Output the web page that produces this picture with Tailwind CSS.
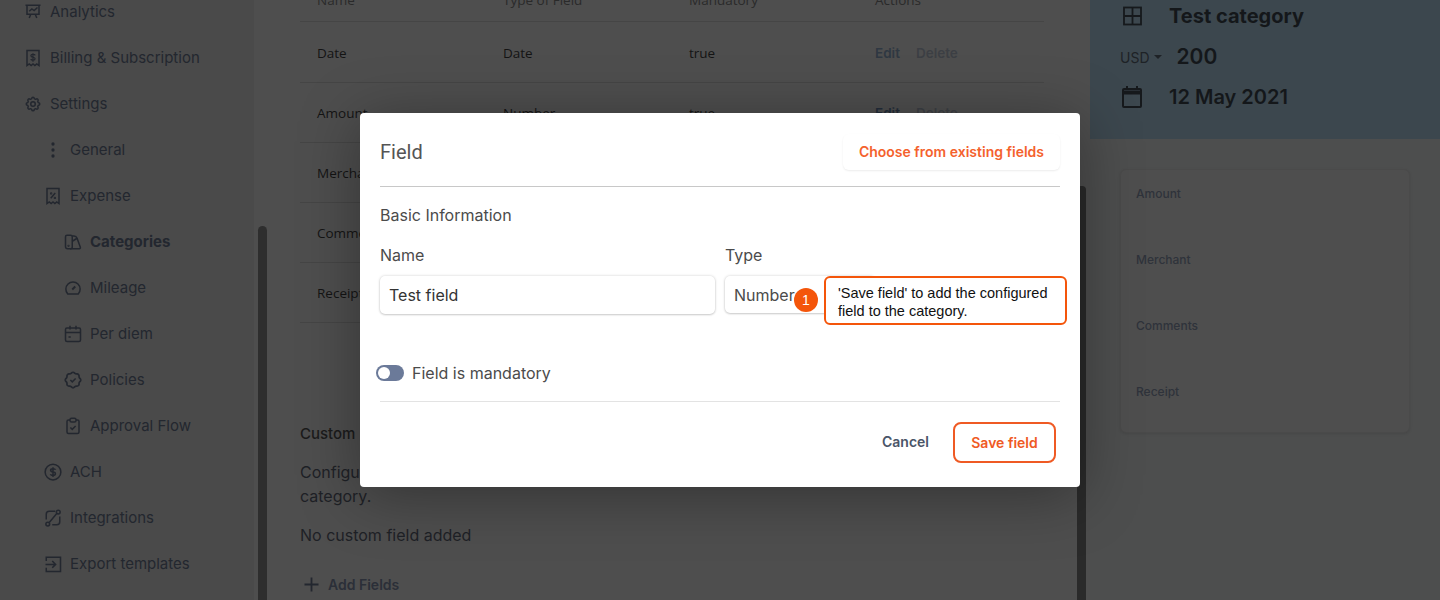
<!DOCTYPE html>
<html lang="en">
<head>
    <meta charset="UTF-8">
    <meta name="viewport" content="width=device-width, initial-scale=1.0">
    <title>Category field</title>
    <script src="https://cdn.jsdelivr.net/npm/@tailwindcss/browser@4"></script>
</head>
<body class="h-[600px] overflow-hidden bg-[#4d4d4d] font-['Inter',sans-serif]">
    <div class="relative flex h-[600px] w-[1440px] overflow-hidden">

        <!-- sidebar -->
        <aside class="relative h-full w-[254px] shrink-0 bg-[#4a4a4a] text-[15px] text-[#23272f]">
            <div class="-mt-[11px] flex flex-col">
                <a class="flex h-[46px] items-center gap-2 pl-6">
                    <svg class="h-[18px] w-[18px]" viewBox="0 0 24 24" fill="none" stroke="#23272f" stroke-width="2"><path d="M2 3h20M4 3v12h16V3M7 11l3.500-3 3 2L18 6M9 15l-2 5M15 15l2 5"/></svg>
                    <span>Analytics</span>
                </a>
                <a class="flex h-[46px] items-center gap-2 pl-6">
                    <svg class="h-[18px] w-[18px]" viewBox="0 0 24 24" fill="none" stroke="#23272f" stroke-width="2"><path d="M4 2h16v20l-3-2-2.500 2-2.500-2-2.500 2L7 20l-3 2z"/><path d="M15 8.500c-.5-1-1.500-1.500-3-1.500-1.700 0-2.800.8-2.800 2s1 1.800 2.800 2 2.800.9 2.800 2.100-1.100 1.900-2.800 1.900c-1.500 0-2.500-.5-3-1.500M12 5.500v11.500" stroke-width="1.600"/></svg>
                    <span>Billing &amp; Subscription</span>
                </a>
                <a class="flex h-[46px] items-center gap-2 pl-6">
                    <svg class="h-[18px] w-[18px]" viewBox="0 0 24 24" fill="none" stroke="#23272f" stroke-width="2"><path d="M10.325 4.317c.426 -1.756 2.924 -1.756 3.35 0a1.724 1.724 0 0 0 2.573 1.066c1.543 -.94 3.31 .826 2.37 2.37a1.724 1.724 0 0 0 1.065 2.572c1.756 .426 1.756 2.924 0 3.35a1.724 1.724 0 0 0 -1.066 2.573c.94 1.543 -.826 3.31 -2.37 2.37a1.724 1.724 0 0 0 -2.572 1.065c-.426 1.756 -2.924 1.756 -3.35 0a1.724 1.724 0 0 0 -2.573 -1.066c-1.543 .94 -3.31 -.826 -2.37 -2.37a1.724 1.724 0 0 0 -1.065 -2.572c-1.756 -.426 -1.756 -2.924 0 -3.35a1.724 1.724 0 0 0 1.066 -2.573c-.94 -1.543 .826 -3.31 2.37 -2.37c1 .608 2.296 .07 2.572 -1.065z"/><circle cx="12" cy="12" r="3"/></svg>
                    <span>Settings</span>
                </a>
                <a class="flex h-[46px] items-center gap-2 pl-11">
                    <svg class="h-[18px] w-[18px]" viewBox="0 0 24 24" fill="#23272f"><circle cx="12" cy="4" r="2.200"/><circle cx="12" cy="12" r="2.200"/><circle cx="12" cy="20" r="2.200"/></svg>
                    <span>General</span>
                </a>
                <a class="flex h-[46px] items-center gap-2 pl-11">
                    <svg class="h-[18px] w-[18px]" viewBox="0 0 24 24" fill="none" stroke="#23272f" stroke-width="2"><path d="M4 2h16v20l-3-2-2.500 2-2.500-2-2.500 2L7 20l-3 2z"/><path d="M9 15l6-7"/><circle cx="9.500" cy="8.500" r=".6"/><circle cx="14.500" cy="14.500" r=".6"/></svg>
                    <span>Expense</span>
                </a>
                <a class="flex h-[46px] items-center gap-2 pl-16 font-bold">
                    <svg class="h-[18px] w-[18px]" viewBox="0 0 24 24" fill="none" stroke="#23272f" stroke-width="2"><path d="M2 5a2 2 0 0 1 2-2h5a2 2 0 0 1 2 2v14a2 2 0 0 1-2 2H5a3 3 0 0 1-3-3z"/><path d="M11 4h2.500a4 4 0 0 1 3.800 2.800l4.500 12.200a1.500 1.500 0 0 1-1.500 2H8"/><path d="M11 11l6.500-4"/><circle cx="6" cy="17" r=".5"/></svg>
                    <span>Categories</span>
                </a>
                <a class="flex h-[46px] items-center gap-2 pl-16">
                    <svg class="h-[18px] w-[18px]" viewBox="0 0 24 24" fill="none" stroke="#23272f" stroke-width="2"><path d="M5 20a9.500 9.500 0 1 1 14 0z"/><path d="M11 14l4-4" stroke-width="2.600"/></svg>
                    <span>Mileage</span>
                </a>
                <a class="flex h-[46px] items-center gap-2 pl-16">
                    <svg class="h-[18px] w-[18px]" viewBox="0 0 24 24" fill="none" stroke="#23272f" stroke-width="2"><rect x="2" y="4" width="20" height="18" rx="2"/><path d="M2 10h20M8 1v5M16 1v5M6 16h3"/></svg>
                    <span>Per diem</span>
                </a>
                <a class="flex h-[46px] items-center gap-2 pl-16">
                    <svg class="h-[18px] w-[18px]" viewBox="0 0 24 24" fill="none" stroke="#23272f" stroke-width="2"><path transform="translate(-1.800 -1.800) scale(1.150)" d="M5 7.200a2.200 2.200 0 0 1 2.200 -2.200h1a2.200 2.200 0 0 0 1.550 -.64l.7 -.7a2.200 2.200 0 0 1 3.120 0l.7 .7c.412 .41 .97 .64 1.550 .64h1a2.200 2.200 0 0 1 2.200 2.200v1c0 .58 .23 1.138 .64 1.550l.7 .7a2.200 2.200 0 0 1 0 3.120l-.7 .7a2.200 2.200 0 0 0 -.64 1.550v1a2.200 2.200 0 0 1 -2.200 2.200h-1a2.200 2.200 0 0 0 -1.550 .64l-.7 .7a2.200 2.200 0 0 1 -3.120 0l-.7 -.7a2.200 2.200 0 0 0 -1.550 -.64h-1a2.200 2.200 0 0 1 -2.200 -2.200v-1a2.200 2.200 0 0 0 -.64 -1.550l-.7 -.7a2.200 2.200 0 0 1 0 -3.120l.7 -.7a2.200 2.200 0 0 0 .64 -1.550v-1"/><path d="M8.500 12l2.500 2.500 4.500-4.500"/></svg>
                    <span>Policies</span>
                </a>
                <a class="flex h-[46px] items-center gap-2 pl-16">
                    <svg class="h-[18px] w-[18px]" viewBox="0 0 24 24" fill="none" stroke="#23272f" stroke-width="2"><path d="M8 4H6a2 2 0 0 0-2 2v14a2 2 0 0 0 2 2h12a2 2 0 0 0 2-2V6a2 2 0 0 0-2-2h-2"/><rect x="8" y="1.500" width="8" height="5" rx="2"/><path d="M8.500 14l2.500 2.500 4.500-4.500"/></svg>
                    <span>Approval Flow</span>
                </a>
                <a class="flex h-[46px] items-center gap-2 pl-11">
                    <svg class="h-[18px] w-[18px]" viewBox="0 0 24 24" fill="none" stroke="#23272f" stroke-width="2"><circle cx="12" cy="12" r="10.500"/><path d="M15.500 9c-.5-1-1.800-1.500-3.500-1.500-2 0-3.200.9-3.200 2.200 0 1.400 1.200 2 3.200 2.300s3.200.9 3.200 2.200-1.200 2.300-3.200 2.300c-1.700 0-3-.5-3.500-1.500M12 5.500v13"/></svg>
                    <span>ACH</span>
                </a>
                <a class="flex h-[46px] items-center gap-2 pl-11">
                    <svg class="h-[18px] w-[18px]" viewBox="0 0 24 24" fill="none" stroke="#23272f" stroke-width="2"><circle cx="5" cy="20" r="2.500"/><circle cx="19" cy="4" r="2.500"/><path d="M7 18L17 6M3 14V7a4 4 0 0 1 4-4h8M21 10v7a4 4 0 0 1-4 4h-6"/></svg>
                    <span>Integrations</span>
                </a>
                <a class="flex h-[46px] items-center gap-2 pl-11">
                    <svg class="h-[18px] w-[18px]" viewBox="0 0 24 24" fill="none" stroke="#23272f" stroke-width="2"><path d="M3 8V3h19v19H3v-5M2 12.500h13M11 8l4.500 4.500L11 17"/></svg>
                    <span>Export templates</span>
                </a>
            </div>
        </aside>

        <!-- main content -->
        <main class="relative h-full w-[836px] shrink-0 bg-[#4e4e4e] pl-[46px] pr-[46px]">
            <div class="absolute left-[4px] top-[226px] h-[400px] w-[9px] rounded-full bg-[#2e2e2e]"></div>
            <div class="-mt-[18px] font-['Open_Sans',sans-serif] text-[13.500px] text-[#141414]">
                <div class="grid h-[40px] grid-cols-[186px_186px_186px_1fr] items-center border-b border-[#454545] pb-[3px] pl-[17px] text-[#2a2a2a]">
                    <span>Name</span><span>Type of Field</span><span>Mandatory</span><span>Actions</span>
                </div>
                <div class="grid h-[61px] grid-cols-[186px_186px_186px_1fr] items-center border-b border-[#454545] pl-[17px] pt-[3px]">
                    <span>Date</span><span>Date</span><span>true</span>
                    <span class="flex gap-4 font-['Inter',sans-serif] text-[13.500px] font-semibold"><span class="text-[#2f3842]">Edit</span><span class="text-[#3c3f44]">Delete</span></span>
                </div>
                <div class="grid h-[60px] grid-cols-[186px_186px_186px_1fr] items-center border-b border-[#454545] pl-[17px] pt-[2px]">
                    <span>Amount</span><span>Number</span><span>true</span>
                    <span class="flex gap-4 font-['Inter',sans-serif] text-[13.500px] font-semibold"><span class="text-[#232d3a]">Edit</span><span class="text-[#3c3f44]">Delete</span></span>
                </div>
                <div class="grid h-[60px] grid-cols-[186px_186px_186px_1fr] items-center border-b border-[#454545] pl-[17px] pt-[2px]">
                    <span>Merchant</span><span>Text</span><span>true</span><span></span>
                </div>
                <div class="grid h-[60px] grid-cols-[186px_186px_186px_1fr] items-center border-b border-[#454545] pl-[17px] pt-[2px]">
                    <span>Comments</span><span>Text</span><span>false</span><span></span>
                </div>
                <div class="grid h-[60px] grid-cols-[186px_186px_186px_1fr] items-center border-b border-[#454545] pl-[17px] pt-[2px]">
                    <span>Receipt</span><span>File</span><span>false</span><span></span>
                </div>
            </div>
            <h3 class="mt-[100px] text-[15px] font-medium leading-[22px] text-[#1b1b1b]">Custom Fields</h3>
            <p class="mt-[15px] w-[740px] text-[16px] leading-[24px] text-[#1e2126]">Configure the custom fields that you would like to collect from your users for this<br>category.</p>
            <p class="mt-[15px] text-[16px] leading-[24px] text-[#1e2126]">No custom field added</p>
            <div class="mt-[27px] flex items-center gap-[8px] pl-[3px] text-[14px] font-semibold text-[#2b2f38]">
                <svg class="h-[17px] w-[17px]" viewBox="0 0 17 17" fill="none" stroke="#23272f" stroke-width="1.800"><path d="M8.500 1.500v14M1.500 8.500h14"/></svg>
                <span>Add Fields</span>
            </div>
            <div class="absolute left-[823px] top-[186px] h-[430px] w-[9px] rounded-t-[4px] bg-[#2a2a2a]"></div>
        </main>

        <!-- preview panel -->
        <section class="h-full w-[350px] shrink-0 bg-[#4d4e4e]">
            <div class="flex h-[139px] flex-col bg-[#3c474e] pl-[30px] text-[#14171a]">
                <div class="-mt-[1px] flex h-[34px] items-center text-[20px] font-bold">
                    <svg class="ml-[2px] h-[20px] w-[20px]" viewBox="0 0 20 20" fill="none" stroke="#16191c" stroke-width="1.800"><rect x="2" y="1.500" width="17" height="17"/><path d="M10.500 1.500v17M2 10h17"/></svg>
                    <span class="ml-[27px]">Test category</span>
                </div>
                <div class="mt-[10px] flex h-[28px] items-center">
                    <span class="text-[14px] text-[#1e2226]">USD</span>
                    <span class="ml-[4px] h-0 w-0 border-x-[4px] border-t-[4px] border-x-transparent border-t-[#1e2226]"></span>
                    <span class="ml-[15px] text-[21px] font-semibold">200</span>
                </div>
                <div class="mt-[12px] flex h-[28px] items-center text-[20px] font-semibold">
                    <svg class="ml-[1px] h-[24px] w-[22px]" viewBox="0 0 22 24" fill="none" stroke="#16191c" stroke-width="2"><rect x="2" y="4" width="18" height="18" rx="1"/><path d="M1 7.500h20" stroke-width="4"/><path d="M6 1v4M16 1v4"/></svg>
                    <span class="ml-[26px]">12 May 2021</span>
                </div>
            </div>
            <div class="ml-[30px] mt-[30px] h-[264px] w-[290px] rounded-[6px] border border-[#4a4a4a] bg-[#4e4e4e] pl-[15px] pt-[15px] text-[12px] font-medium text-[#2f333b] shadow-[0_1px_3px_rgba(0,0,0,0.1)]">
                <div class="h-[66px] leading-[18px]">Amount</div>
                <div class="h-[66px] leading-[18px]">Merchant</div>
                <div class="h-[66px] leading-[18px]">Comments</div>
                <div class="h-[66px] leading-[18px]">Receipt</div>
            </div>
        </section>

        <!-- modal -->
        <div class="absolute left-[360px] top-[113px] flex h-[374px] w-[720px] flex-col rounded-[4px] bg-white px-5 shadow-[0_8px_60px_rgba(0,0,0,0.35)]">
            <div class="flex h-[74px] items-center justify-between border-b border-[#c8c8c8] pt-[4px]">
                <h2 class="font-['Roboto',sans-serif] text-[20px] text-[#555555]">Field</h2>
                <button class="h-[36px] w-[217px] rounded-[6px] text-[14px] font-semibold text-[#f4622d] shadow-[0_1px_2px_rgba(0,0,0,0.08)]">Choose from existing fields</button>
            </div>
            <p class="mt-[17px] text-[16px] leading-[22px] text-[#4b4b4b]">Basic Information</p>
            <div class="mt-[18px] flex gap-[10px]">
                <div class="w-[335px]">
                    <label class="block text-[16px] leading-[22px] text-[#4b4b4b]">Name</label>
                    <div class="mt-[10px] flex h-[38px] items-center rounded-[5px] px-[9px] text-[16px] text-[#333333] shadow-[0_0_3px_rgba(0,0,0,0.18),0_1px_2px_rgba(0,0,0,0.14)]">Test field</div>
                </div>
                <div class="w-[150px]">
                    <label class="block text-[16px] leading-[22px] text-[#4b4b4b]">Type</label>
                    <div class="mt-[10px] flex h-[37px] items-center rounded-[5px] px-[9px] text-[16px] text-[#4b4b4b] shadow-[0_0_3px_rgba(0,0,0,0.18),0_1px_2px_rgba(0,0,0,0.14)]">Number</div>
                </div>
            </div>
            <div class="-ml-[4px] mt-[51px] flex h-[16px] items-center gap-2 text-[16px] text-[#4b4b4b]">
                <span class="flex h-[16px] w-[28px] items-center rounded-full bg-[#6b7a99] pl-[2px]"><span class="h-[12px] w-[12px] rounded-full bg-white"></span></span>
                <span>Field is mandatory</span>
            </div>
            <div class="mt-[20px] flex h-[62px] items-end justify-end gap-6 border-t border-[#e3e3e3] pr-1 text-[14px] font-semibold">
                <button class="mb-[11px] text-[#4a5568]">Cancel</button>
                <button class="h-[41px] w-[103px] rounded-[8px] border-2 border-[#ef5a24] text-[#ef5a24]">Save field</button>
            </div>
        </div>

        <!-- tour tooltip -->
        <div class="absolute left-[794px] top-[288px] flex h-6 w-6 items-center justify-center rounded-full bg-[#f4550a] font-['Liberation_Sans',sans-serif] text-[14px] text-white">1</div>
        <div class="absolute left-[824px] top-[276px] h-[49px] w-[243px] rounded-[6px] border-2 border-[#f4550a] bg-white pl-[12px] pt-[6px] font-['Liberation_Sans',sans-serif] text-[14.500px] leading-[18px] text-[#111111]">'Save field' to add the configured<br>field to the category.</div>
    </div>
</body>
</html>
